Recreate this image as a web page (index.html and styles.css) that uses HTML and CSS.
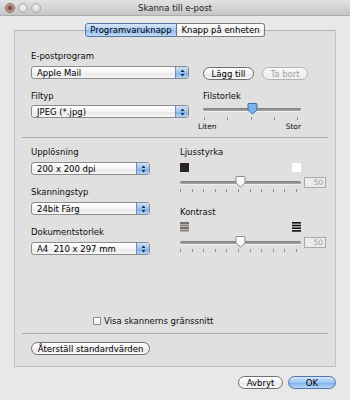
FILE: index.html
```html
<!DOCTYPE html>
<html>

<head>
    <title>Skanna till e-post</title>
    <link rel="stylesheet" href="styles.css">
</head>

<body>
    <div class="titlebar">
        <div class="lights">
            <span class="light close"></span>
            <span class="light"></span>
            <span class="light"></span>
        </div>
        <div class="title">Skanna till e-post</div>
        <div></div>
    </div>

    <div class="tabs">
        <span class="tab active">Programvaruknapp</span><span class="tab">Knapp på enheten</span>
    </div>

    <div class="group">
        <div class="section section-app">
            <div class="col">
                <div class="label">E-postprogram</div>
                <div class="popup">Apple Mail<span class="arrows"><svg width="5" height="8" viewBox="0 0 5 8"><path d="M2.5 0.5 L4.5 3 H0.5 Z M2.5 7.5 L4.5 5 H0.5 Z" fill="#1a2a40"/></svg></span></div>
                <div class="label label-gap">Filtyp</div>
                <div class="popup popup-gap">JPEG (*.jpg)<span class="arrows"><svg width="5" height="8" viewBox="0 0 5 8"><path d="M2.5 0.5 L4.5 3 H0.5 Z M2.5 7.5 L4.5 5 H0.5 Z" fill="#1a2a40"/></svg></span></div>
            </div>
            <div class="col">
                <div class="buttons">
                    <span class="pill add">Lägg till</span>
                    <span class="pill disabled remove">Ta bort</span>
                </div>
                <div class="label size-label">Filstorlek</div>
                <div class="slider small">
                    <div class="track"></div>
                    <svg class="thumb" style="left: 44px" width="11" height="12" viewBox="0 0 11 12"><path d="M1 1.5 Q1 0.5 2 0.5 H9 Q10 0.5 10 1.5 V7 L5.5 11 L1 7 Z" fill="#7eb0ea" stroke="#3f6aa6"/></svg>
                </div>
                <div class="ticks five"><i></i><i></i><i></i><i></i><i></i></div>
                <div class="range-labels"><span>Liten</span><span>Stor</span></div>
            </div>
        </div>

        <div class="divider"></div>

        <div class="section section-scan">
            <div class="col">
                <div class="label">Upplösning</div>
                <div class="popup">200 x 200 dpi<span class="arrows"><svg width="5" height="8" viewBox="0 0 5 8"><path d="M2.5 0.5 L4.5 3 H0.5 Z M2.5 7.5 L4.5 5 H0.5 Z" fill="#1a2a40"/></svg></span></div>
                <div class="label label-gap">Skanningstyp</div>
                <div class="popup">24bit Färg<span class="arrows"><svg width="5" height="8" viewBox="0 0 5 8"><path d="M2.5 0.5 L4.5 3 H0.5 Z M2.5 7.5 L4.5 5 H0.5 Z" fill="#1a2a40"/></svg></span></div>
                <div class="label label-gap">Dokumentstorlek</div>
                <div class="popup">A4&nbsp; 210 x 297 mm<span class="arrows"><svg width="5" height="8" viewBox="0 0 5 8"><path d="M2.5 0.5 L4.5 3 H0.5 Z M2.5 7.5 L4.5 5 H0.5 Z" fill="#1a2a40"/></svg></span></div>
            </div>
            <div class="col">
                <div class="label">Ljusstyrka</div>
                <div class="icons">
                    <span class="swatch dark"></span>
                    <span class="swatch light-swatch"></span>
                </div>
                <div class="slider-row">
                    <div class="slider">
                        <div class="track"></div>
                        <svg class="thumb" style="left: 55px" width="11" height="12" viewBox="0 0 11 12"><path d="M1 1.5 Q1 0.5 2 0.5 H9 Q10 0.5 10 1.5 V7 L5.5 11 L1 7 Z" fill="#fafafa" stroke="#8a8a8a"/></svg>
                    </div>
                    <span class="value">50</span>
                </div>
                <div class="ticks eleven"><i></i><i></i><i></i><i></i><i></i><i></i><i></i><i></i><i></i><i></i><i></i></div>

                <div class="label contrast-label">Kontrast</div>
                <div class="icons contrast-icons">
                    <svg width="9" height="10" viewBox="0 0 9 10">
                        <rect y="0" width="9" height="2" fill="#7a706b"/>
                        <rect y="2.5" width="9" height="2" fill="#8c817b"/>
                        <rect y="5" width="9" height="2" fill="#7a706b"/>
                        <rect y="7.5" width="9" height="2" fill="#8c817b"/>
                    </svg>
                    <svg width="9" height="10" viewBox="0 0 9 10">
                        <rect y="0" width="9" height="1.6" fill="#111"/>
                        <rect y="2.7" width="9" height="1.6" fill="#111"/>
                        <rect y="5.4" width="9" height="1.6" fill="#111"/>
                        <rect y="8.1" width="9" height="1.6" fill="#111"/>
                    </svg>
                </div>
                <div class="slider-row">
                    <div class="slider">
                        <div class="track"></div>
                        <svg class="thumb" style="left: 55px" width="11" height="12" viewBox="0 0 11 12"><path d="M1 1.5 Q1 0.5 2 0.5 H9 Q10 0.5 10 1.5 V7 L5.5 11 L1 7 Z" fill="#fafafa" stroke="#8a8a8a"/></svg>
                    </div>
                    <span class="value">50</span>
                </div>
                <div class="ticks eleven"><i></i><i></i><i></i><i></i><i></i><i></i><i></i><i></i><i></i><i></i><i></i></div>
            </div>
        </div>

        <label class="check-row"><span class="checkbox"></span>Visa skannerns gränssnitt</label>

        <div class="divider bottom-divider"></div>

        <div class="reset-row">
            <span class="pill reset">Återställ standardvärden</span>
        </div>
    </div>

    <div class="footer">
        <span class="pill cancel">Avbryt</span>
        <span class="pill ok">OK</span>
    </div>
</body>

</html>
```

FILE: styles.css
```css
body {
    margin: 0;
    width: 350px;
    height: 400px;
    overflow: hidden;
    background: #e8e8e8;
    font-family: "DejaVu Sans", "Liberation Sans", sans-serif;
    font-size: 8.5px;
    color: #0d0d0d;
}

/* title bar */

.titlebar {
    display: grid;
    grid-template-columns: 1fr auto 1fr;
    align-items: center;
    height: 15px;
    background: linear-gradient(#e2e2e2, #c6c6c6);
    border-bottom: 1px solid #ababab;
}

.lights {
    display: flex;
    gap: 3px;
    padding-left: 5px;
}

.light {
    width: 10px;
    height: 10px;
    box-sizing: border-box;
    border-radius: 50%;
    border: 1px solid #a9a9a9;
    background: radial-gradient(circle at 50% 40%, #f2f2f2, #cdcdcd);
}

.light.close {
    border-color: #8e6b5f;
    background: radial-gradient(circle at 50% 50%, #5e3f37 0, #7b5449 25%, #c39a8a 60%, #d9b9ab);
}

.title {
    font-size: 8.5px;
    color: #222;
}

/* tabs */

.tabs {
    position: relative;
    z-index: 1;
    display: flex;
    justify-content: center;
    margin-top: 7px;
    margin-bottom: -7px;
}

.tab {
    height: 14px;
    box-sizing: border-box;
    display: flex;
    align-items: center;
    justify-content: center;
    border: 1px solid #7c7c7c;
    background: linear-gradient(#ffffff, #f3f3f3 50%, #e7e7e7 51%, #fbfbfb);
    color: #000;
}

.tab:first-child {
    width: 92px;
    border-radius: 3px 0 0 3px;
}

.tab:last-child {
    width: 88px;
    border-left: none;
    border-radius: 0 3px 3px 0;
}

.tab.active {
    border-color: #56779f;
    background: linear-gradient(#d6e7fa, #a9cbf1 50%, #8bb8ec 51%, #c1ddf9);
}

/* group box */

.group {
    margin: 0 14px;
    height: 337px;
    box-sizing: border-box;
    padding: 19px 7px 0;
    border: 1px solid #c2c2c2;
    border-top-color: #b2b2b2;
    background: #e0e0e0;
}

.section {
    display: grid;
    padding-left: 9px;
}

.section-app {
    grid-template-columns: 158px auto;
    column-gap: 14px;
}

.section-scan {
    grid-template-columns: 119px 146px;
    column-gap: 30px;
    margin-top: 8px;
}

.label {
    line-height: 12px;
    height: 12px;
}

.label-gap {
    margin-top: 11px;
}

.divider {
    height: 1px;
    margin-top: 5px;
    background: #a9a9a9;
}

/* popup menus */

.popup {
    display: flex;
    align-items: center;
    height: 13px;
    box-sizing: border-box;
    margin-top: 4px;
    padding-left: 5px;
    border: 1px solid #8c8c8c;
    border-radius: 3px;
    background: linear-gradient(#ffffff, #f4f4f4 50%, #e8e8e8 51%, #f7f7f7);
    color: #000;
    white-space: nowrap;
}

.popup-gap {
    margin-top: 3px;
}

.popup .arrows {
    display: flex;
    align-items: center;
    justify-content: center;
    margin-left: auto;
    width: 12px;
    height: 100%;
    border-left: 1px solid #6a8fc2;
    border-radius: 0 2px 2px 0;
    background: linear-gradient(#cfe2f8, #9dc3ee 50%, #7cadea 51%, #b3d3f6);
}

/* buttons */

.pill {
    display: inline-flex;
    align-items: center;
    justify-content: center;
    height: 13px;
    box-sizing: border-box;
    border: 1px solid #6f6f6f;
    border-radius: 7px;
    background: linear-gradient(#ffffff, #f3f3f3 50%, #e5e5e5 51%, #fafafa);
    color: #000;
}

.pill.disabled {
    border-color: #b4b4b4;
    color: #a2a2a2;
    background: linear-gradient(#f7f7f7, #eeeeee);
}

.buttons {
    display: flex;
    gap: 8px;
    margin-top: 17px;
}

.add {
    width: 51px;
}

.remove {
    width: 46px;
}

.size-label {
    margin-top: 10px;
}

/* sliders */

.slider {
    position: relative;
    width: 121px;
    height: 12px;
    display: flex;
    align-items: center;
}

.slider.small {
    width: 98px;
    margin-top: 1px;
}

.track {
    width: 100%;
    height: 3px;
    border-radius: 2px;
    background: linear-gradient(#7d7d7d, #a8a8a8);
    box-shadow: 0 1px 0 #f0f0f0;
}

.thumb {
    position: absolute;
    top: 0;
}

.ticks {
    display: flex;
    justify-content: space-between;
    height: 3px;
}

.ticks i {
    width: 1px;
    background: #8e8e8e;
}

.ticks.five {
    width: 94px;
    margin: 2px 0 0 1px;
}

.ticks.eleven {
    width: 117px;
    margin-top: 1px;
}

.range-labels {
    display: flex;
    justify-content: space-between;
    width: 103px;
    margin: 2px 0 0 -5px;
    font-size: 7.5px;
    line-height: 10px;
}

.slider-row {
    display: flex;
    align-items: center;
    gap: 3px;
    margin-top: 4px;
}

.value {
    width: 22px;
    height: 11px;
    box-sizing: border-box;
    border: 1px solid #aaaaaa;
    background: #ebebeb;
    color: #9b9b9b;
    font-size: 7.5px;
    line-height: 9px;
    text-align: right;
    padding-right: 2px;
}

.icons {
    display: flex;
    justify-content: space-between;
    width: 121px;
    margin-top: 5px;
    height: 9px;
}

.swatch {
    width: 9px;
    height: 9px;
}

.swatch.dark {
    background: #2b2328;
}

.swatch.light-swatch {
    background: #ffffff;
}

.contrast-label {
    margin-top: 14px;
}

.contrast-icons {
    height: 10px;
    margin-top: 4px;
}

/* bottom of group */

.check-row {
    display: flex;
    align-items: center;
    gap: 3px;
    height: 10px;
    margin: 61px 0 0 71px;
}

.checkbox {
    width: 8px;
    height: 8px;
    box-sizing: border-box;
    border: 1px solid #8a8a8a;
    border-radius: 1px;
    background: linear-gradient(#ffffff, #ececec);
}

.bottom-divider {
    margin-top: 7px;
}

.reset-row {
    margin-top: 8px;
    padding-left: 9px;
}

.reset {
    width: 119px;
}

/* footer */

.footer {
    display: flex;
    justify-content: flex-end;
    gap: 5px;
    margin-top: 9px;
    padding-right: 14px;
}

.cancel {
    width: 45px;
}

.ok {
    width: 48px;
    border-color: #4f77ad;
    background: linear-gradient(#d3e6fb, #9cc6f2 50%, #78aeea 51%, #b9d9f8);
}
```
